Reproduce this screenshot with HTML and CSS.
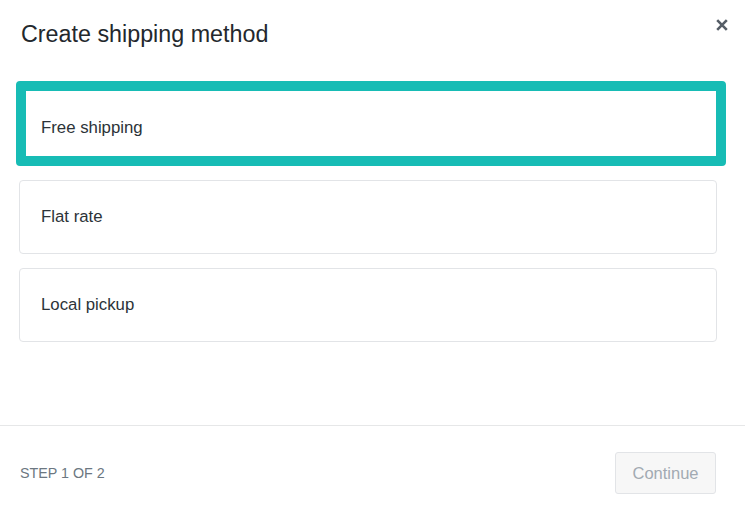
FILE: index.html
```html
<!DOCTYPE html>
<html>
<head>
<meta charset="utf-8">
<link rel="stylesheet" href="styles.css">
</head>
<body>
<div class="modal">
  <div class="header">
    <h1 class="title">Create shipping method</h1>
    <button class="close" aria-label="Close">
      <svg width="12" height="12" viewBox="0 0 12 12"><path d="M1.2 1.2 L10.8 10.8 M10.8 1.2 L1.2 10.8" stroke="#555d66" stroke-width="2.6" stroke-linecap="butt"/></svg>
    </button>
  </div>
  <div class="options">
    <div class="option selected">Free shipping</div>
    <div class="option">Flat rate</div>
    <div class="option">Local pickup</div>
  </div>
  <div class="footer">
    <span class="step">STEP 1 OF 2</span>
    <button class="continue">Continue</button>
  </div>
</div>
</body>
</html>
```
FILE: styles.css
```css
html, body {
  margin: 0;
  padding: 0;
  background: #ffffff;
}
body {
  font-family: "Liberation Sans", Arial, sans-serif;
  color: #333333;
}
.modal {
  width: 745px;
  height: 518px;
  display: flex;
  flex-direction: column;
  box-sizing: border-box;
}
.header {
  display: flex;
  justify-content: space-between;
  align-items: flex-start;
  padding: 18px 17px 0 21px;
}
.title {
  margin: 0;
  font-size: 23.3px;
  font-weight: normal;
  line-height: 32px;
  color: #23282d;
}
.close {
  border: 0;
  background: none;
  padding: 0;
  margin-top: 1px;
  width: 12px;
  height: 12px;
  display: flex;
}
.options {
  flex: 1;
  display: flex;
  flex-direction: column;
  gap: 14px;
  margin-top: 31px;
  padding-left: 19px;
  width: 698px;
}
.option {
  box-sizing: border-box;
  height: 74px;
  border: 1px solid #e2e4e7;
  border-radius: 4px;
  padding: 0 21px;
  display: flex;
  align-items: center;
  font-size: 16.8px;
  color: #2c3338;
}
.option.selected {
  margin-left: -3px;
  width: 710px;
  height: 85px;
  border: 10px solid #17bcb5;
  border-radius: 4px;
  padding: 9px 15px 0 15px;
}
.footer {
  display: flex;
  justify-content: space-between;
  align-items: center;
  border-top: 1px solid #e6e7e8;
  padding: 26px 29px 24px 20px;
}
.step {
  font-size: 14.3px;
  color: #6c7781;
}
.continue {
  box-sizing: border-box;
  width: 101px;
  height: 42px;
  border: 1px solid #e2e4e7;
  border-radius: 3px;
  background: #f7f7f7;
  color: #a2aab2;
  font-family: "Liberation Sans", Arial, sans-serif;
  font-size: 16.5px;
  padding: 0;
}
```
